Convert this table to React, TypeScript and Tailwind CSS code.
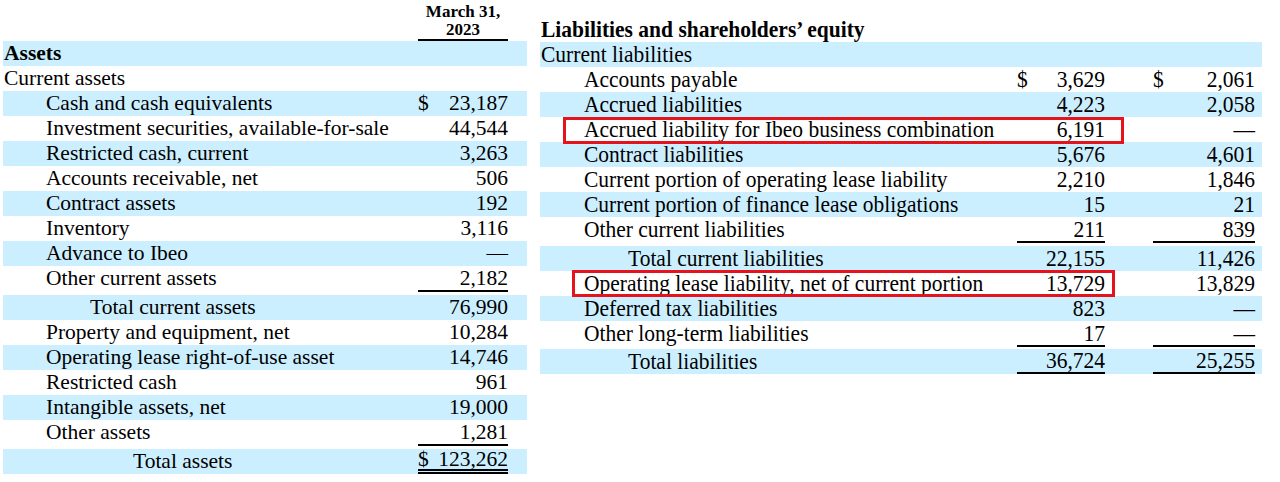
import React from "react";

type Val = { d?: boolean; v: string; u?: "single" | "double" };

const BAND = "bg-[#ccefff]";

function ValueCell({ val, w, h, tall }: { val?: Val; w: string; h: number; tall?: boolean }) {
  if (!val) return <div className={w} />;
  const border =
    val.u === "single"
      ? "border-b-2 border-black"
      : val.u === "double"
      ? "border-b-[5px] border-double border-black"
      : "";
  const sc = tall ? "scale-y-[1.08]" : "";
  return (
    <div className={`${w} flex flex-col`}>
      <div
        className={`flex items-center ${val.d ? "justify-between" : "justify-end"} ${border}`}
        style={{ height: h }}
      >
        {val.d && <span className={sc}>$</span>}
        <span className={sc}>{val.v}</span>
      </div>
    </div>
  );
}

type LRow = {
  label: string;
  level: number;
  band?: boolean;
  bold?: boolean;
  h?: number;
  vh?: number;
  a?: Val;
};

const leftRows: LRow[] = [
  { label: "Assets", level: 0, band: true, bold: true },
  { label: "Current assets", level: 0 },
  { label: "Cash and cash equivalents", level: 1, band: true, a: { d: true, v: "23,187" } },
  { label: "Investment securities, available-for-sale", level: 1, a: { v: "44,544" } },
  { label: "Restricted cash, current", level: 1, band: true, a: { v: "3,263" } },
  { label: "Accounts receivable, net", level: 1, a: { v: "506" } },
  { label: "Contract assets", level: 1, band: true, a: { v: "192" } },
  { label: "Inventory", level: 1, a: { v: "3,116" } },
  { label: "Advance to Ibeo", level: 1, band: true, a: { v: "—" } },
  { label: "Other current assets", level: 1, h: 29, vh: 26, a: { v: "2,182", u: "single" } },
  { label: "Total current assets", level: 2, band: true, a: { v: "76,990" } },
  { label: "Property and equipment, net", level: 1, a: { v: "10,284" } },
  { label: "Operating lease right-of-use asset", level: 1, band: true, a: { v: "14,746" } },
  { label: "Restricted cash", level: 1, a: { v: "961" } },
  { label: "Intangible assets, net", level: 1, band: true, a: { v: "19,000" } },
  { label: "Other assets", level: 1, h: 29, vh: 26, a: { v: "1,281", u: "single" } },
  { label: "Total assets", level: 3, band: true, vh: 25, a: { d: true, v: "123,262", u: "double" } },
];

type RRow = {
  label: string;
  level: number;
  band?: boolean;
  h?: number;
  vh?: number;
  a?: Val;
  b?: Val;
};

const rightRows: RRow[] = [
  { label: "Current liabilities", level: 0, band: true },
  { label: "Accounts payable", level: 1, a: { d: true, v: "3,629" }, b: { d: true, v: "2,061" } },
  { label: "Accrued liabilities", level: 1, band: true, a: { v: "4,223" }, b: { v: "2,058" } },
  { label: "Accrued liability for Ibeo business combination", level: 1, a: { v: "6,191" }, b: { v: "—" } },
  { label: "Contract liabilities", level: 1, band: true, a: { v: "5,676" }, b: { v: "4,601" } },
  { label: "Current portion of operating lease liability", level: 1, a: { v: "2,210" }, b: { v: "1,846" } },
  { label: "Current portion of finance lease obligations", level: 1, band: true, a: { v: "15" }, b: { v: "21" } },
  { label: "Other current liabilities", level: 1, h: 29, vh: 26, a: { v: "211", u: "single" }, b: { v: "839", u: "single" } },
  { label: "Total current liabilities", level: 2, band: true, a: { v: "22,155" }, b: { v: "11,426" } },
  { label: "Operating lease liability, net of current portion", level: 1, a: { v: "13,729" }, b: { v: "13,829" } },
  { label: "Deferred tax liabilities", level: 1, band: true, a: { v: "823" }, b: { v: "—" } },
  { label: "Other long-term liabilities", level: 1, h: 28, vh: 26, a: { v: "17", u: "single" }, b: { v: "—", u: "single" } },
  { label: "Total liabilities", level: 2, band: true, vh: 25, a: { v: "36,724", u: "single" }, b: { v: "25,255", u: "single" } },
];

const leftPad = ["pl-[1px]", "pl-[43px]", "pl-[87px]", "pl-[130px]"];
const rightPad = ["pl-[1px]", "pl-[44px]", "pl-[88px]"];

export default function App() {
  return (
    <div
      className="w-[1280px] h-[482px] bg-white text-black overflow-hidden flex items-start"
      style={{ fontFamily: '"Liberation Serif", "Times New Roman", serif' }}
    >
      {/* Left table: assets */}
      <div className="ml-[3px] w-[524px] flex flex-col text-[21.5px] leading-[25px]">
        <div className="h-[41px] flex">
          <div className="w-[415px]" />
          <div className="w-[90px] pt-[3px] flex flex-col items-center text-[17px] leading-[18px] font-bold border-b-2 border-black">
            <span>March 31,</span>
            <span>2023</span>
          </div>
        </div>
        {leftRows.map((r, i) => (
          <div
            key={i}
            className={`flex items-start ${r.band ? BAND : ""}`}
            style={{ height: r.h ?? 25 }}
          >
            <div className={`w-[415px] h-[25px] flex items-center whitespace-nowrap ${leftPad[r.level]} ${r.bold ? "font-bold" : ""}`}>
              {r.label}
            </div>
            <ValueCell val={r.a} w="w-[90px]" h={r.vh ?? 25} />
          </div>
        ))}
      </div>

      {/* Right table: liabilities */}
      <div className="relative ml-[13px] w-[722px] flex flex-col text-[21.5px] leading-[25px]">
        <div className="h-[42px] flex items-end pl-[1px] font-bold whitespace-nowrap">
          <span className="scale-y-[1.08]">Liabilities and shareholders’ equity</span>
        </div>
        {rightRows.map((r, i) => (
          <div
            key={i}
            className={`flex items-start ${r.band ? BAND : ""}`}
            style={{ height: r.h ?? 25 }}
          >
            <div className={`w-[477px] h-[25px] flex items-center whitespace-nowrap ${rightPad[r.level]}`}>
              <span className="scale-y-[1.08]">{r.label}</span>
            </div>
            <ValueCell val={r.a} w="w-[88px]" h={r.vh ?? 25} tall />
            <div className="w-[48px]" />
            <ValueCell val={r.b} w="w-[102px]" h={r.vh ?? 25} tall />
          </div>
        ))}
        <div className="absolute left-[23px] top-[117px] w-[561px] h-[27px] border-[3px] border-[#e5141c]" />
        <div className="absolute left-[32px] top-[270px] w-[543px] h-[27px] border-[3px] border-[#e5141c]" />
      </div>
    </div>
  );
}
